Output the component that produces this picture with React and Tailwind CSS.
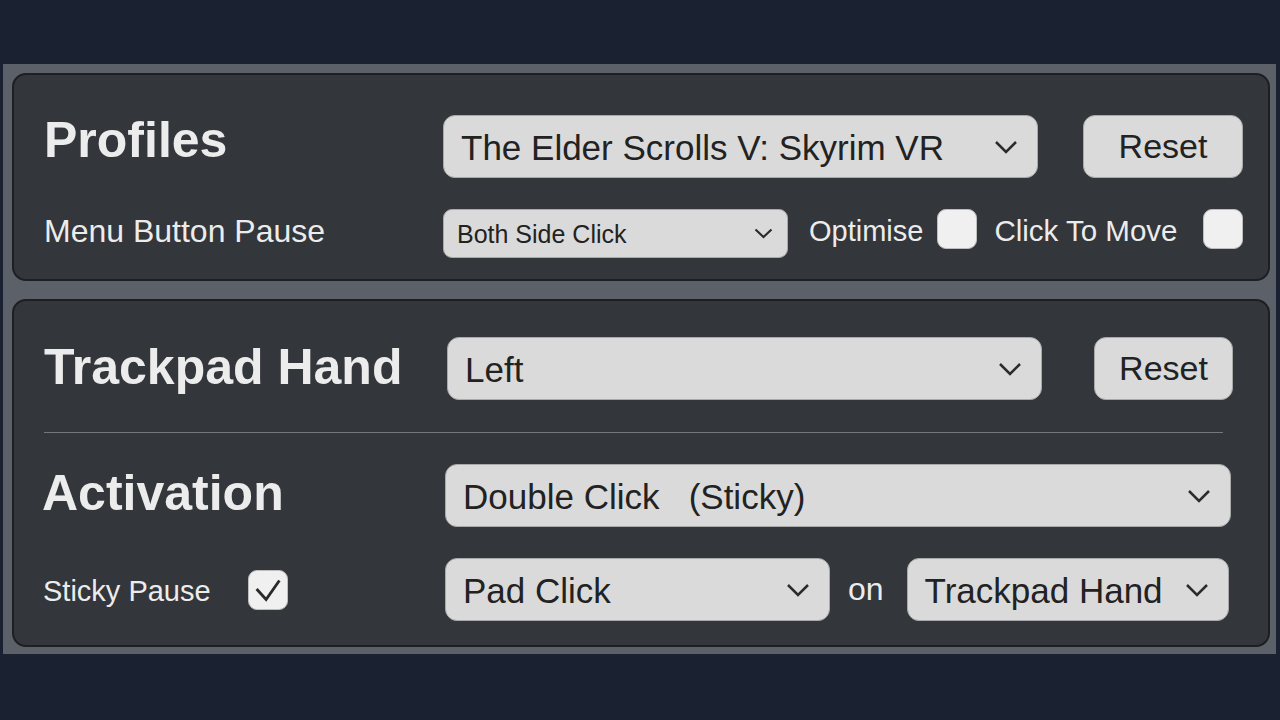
import React from "react";

const font = { fontFamily: '"Liberation Sans", Arial, sans-serif' };

function Chevron({ small }) {
  return small ? (
    <svg width="19" height="11" viewBox="0 0 19 11" className="shrink-0">
      <polyline points="1.5,1.5 9.5,9 17.5,1.5" fill="none" stroke="#2b2b2b" strokeWidth="2.2" />
    </svg>
  ) : (
    <svg width="24" height="14" viewBox="0 0 24 14" className="shrink-0">
      <polyline points="2,2 12,12 22,2" fill="none" stroke="#2b2b2b" strokeWidth="2.5" />
    </svg>
  );
}

function Dropdown({ label, className = "", small }) {
  return (
    <div
      className={
        "flex items-center justify-between bg-[#dadada] border border-[#a9a9a9] text-[#222] whitespace-pre " +
        (small
          ? "h-[49px] rounded-[9px] pl-[13px] pr-[14px] text-[25px] "
          : "h-[63px] rounded-[12px] pl-[17px] pr-[19px] text-[35px] ") +
        className
      }
    >
      <span className={small ? "pt-[2px]" : "pt-[3px]"}>{label}</span>
      <Chevron small={small} />
    </div>
  );
}

function Button({ label, className = "" }) {
  return (
    <div
      className={
        "flex items-center justify-center h-[63px] rounded-[12px] bg-[#dadada] border border-[#a9a9a9] text-[#222] text-[34px] " +
        className
      }
    >
      {label}
    </div>
  );
}

function Checkbox({ checked, className = "" }) {
  return (
    <div
      className={
        "w-[40px] h-[40px] rounded-[9px] bg-[#f0f0f0] border border-[#bdbdbd] shrink-0 flex items-center justify-center " +
        className
      }
    >
      {checked && (
        <svg width="40" height="40" viewBox="0 0 40 40">
          <polyline points="8,19 18,30 32,10" fill="none" stroke="#2a2a2a" strokeWidth="3" />
        </svg>
      )}
    </div>
  );
}

export default function App() {
  return (
    <div style={font} className="w-[1280px] h-[720px] bg-[#1a2231] pt-[64px] pl-[3px] pr-[4px]">
      <div className="bg-[#5c6068] pt-[9px] pl-[9px] pr-[6px] pb-[7px] flex flex-col gap-[18px]">
        {/* Profiles panel */}
        <div className="bg-[#33363b] border-2 border-[#1d1f22] rounded-[14px] pt-[40px] pb-[21px] pl-[30px] flex flex-col gap-[31px]">
          <div className="flex items-center h-[63px]">
            <div className="w-[399px] pb-[12px] text-[50px] font-bold text-[#ececec]">Profiles</div>
            <Dropdown label="The Elder Scrolls V: Skyrim VR" className="w-[595px]" />
            <Button label="Reset" className="w-[160px] ml-[45px]" />
          </div>
          <div className="flex items-center h-[49px] text-[#ececec]">
            <div className="w-[399px] pb-[6px] text-[32px]">Menu Button Pause</div>
            <Dropdown label="Both Side Click" small className="w-[345px]" />
            <span className="ml-[21px] pb-[4px] text-[29px]">Optimise</span>
            <Checkbox className="ml-[14px] self-start" />
            <span className="ml-[17px] pb-[4px] text-[29.5px]">Click To Move</span>
            <Checkbox className="ml-[25px] self-start" />
          </div>
        </div>

        {/* Trackpad panel */}
        <div className="bg-[#33363b] border-2 border-[#1d1f22] rounded-[14px] pt-[36px] pb-[24px] pl-[30px] flex flex-col">
          <div className="flex items-center h-[63px]">
            <div className="w-[403px] pb-[2px] text-[50px] font-bold text-[#ececec]">Trackpad Hand</div>
            <Dropdown label="Left" className="w-[595px]" />
            <Button label="Reset" className="w-[139px] ml-[52px]" />
          </div>
          <div className="h-px bg-[#74777c] w-[1179px] mt-[32px] mb-[31px]" />
          <div className="flex items-center h-[63px]">
            <div className="w-[403px] -ml-[2px] pb-[5px] text-[50px] font-bold text-[#ececec]">Activation</div>
            <Dropdown label="Double Click   (Sticky)" className="w-[786px]" />
          </div>
          <div className="flex items-center h-[63px] mt-[31px] text-[#ececec]">
            <div className="w-[205px] -ml-[1px] pt-[5px] text-[29px]">Sticky Pause</div>
            <Checkbox checked />
            <div className="w-[157px]" />
            <Dropdown label="Pad Click" className="w-[385px]" />
            <span className="ml-[18px] pb-[2px] text-[32px]">on</span>
            <Dropdown label="Trackpad Hand" className="w-[322px] ml-[23px]" />
          </div>
        </div>
      </div>
    </div>
  );
}
